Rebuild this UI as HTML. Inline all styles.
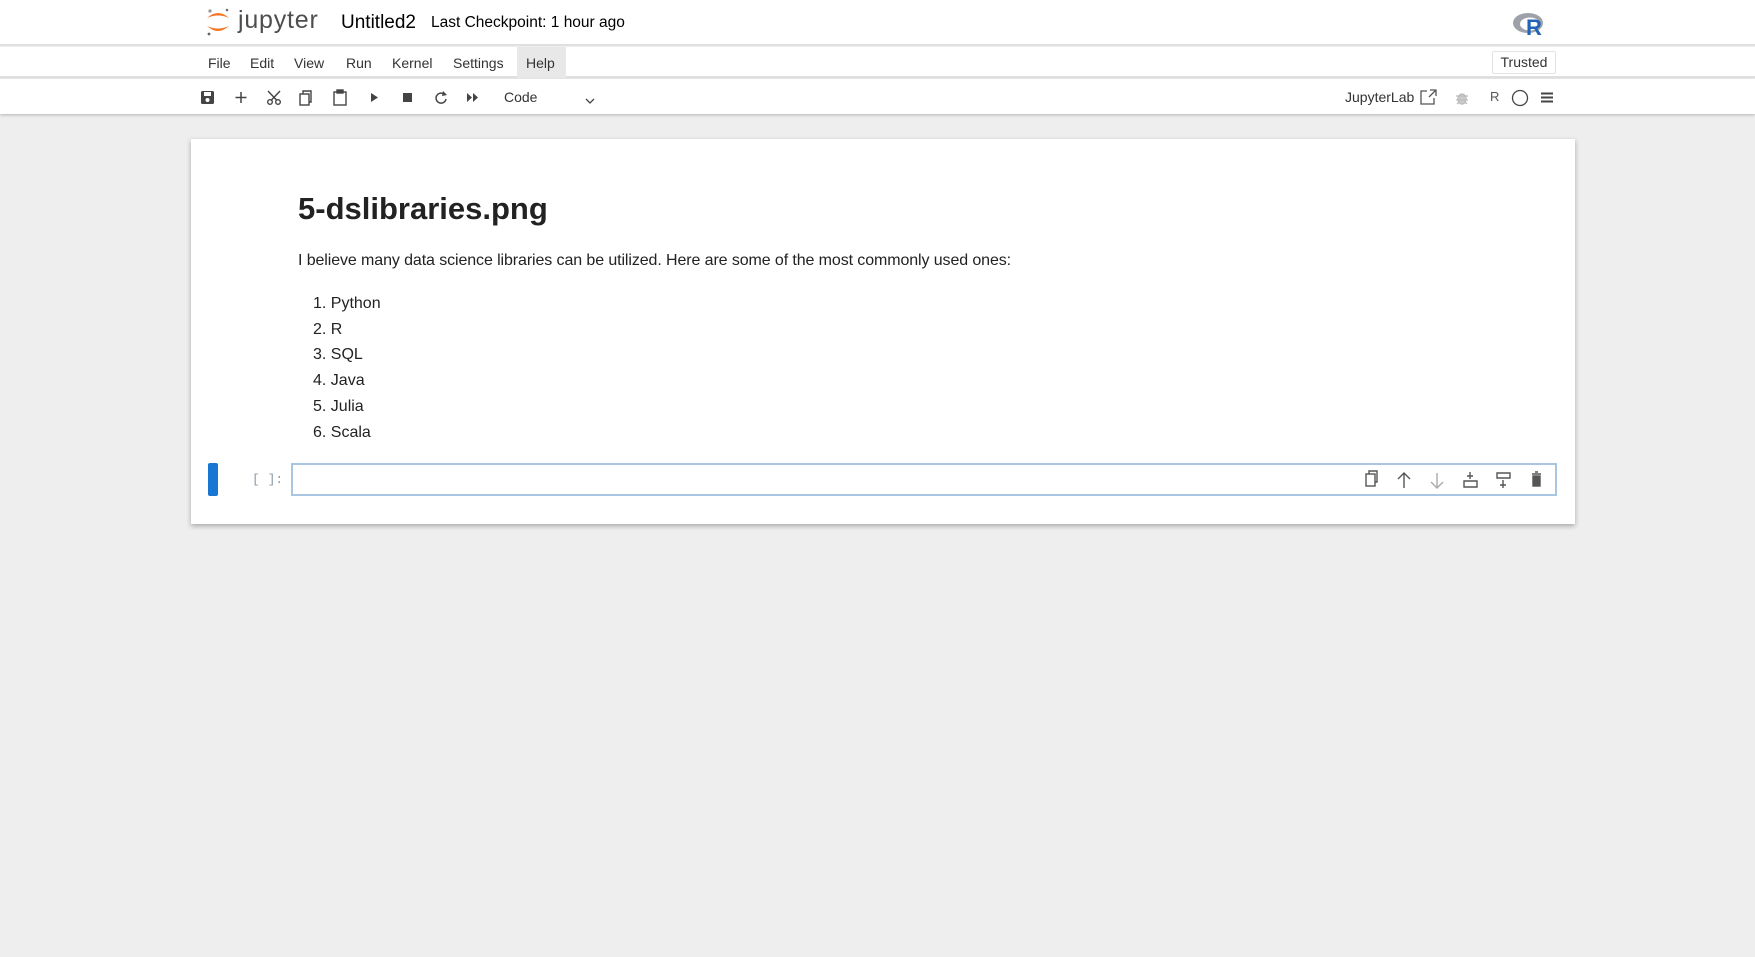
<!DOCTYPE html>
<html><head><meta charset="utf-8"><style>
*{margin:0;padding:0;box-sizing:border-box}
body{width:1755px;height:957px;background:#eeeeee;font-family:"Liberation Sans",sans-serif;color:#000;position:relative;overflow:hidden}
.abs{position:absolute}
#hdr{left:0;top:0;width:1755px;height:46px;background:#fff;border-bottom:2px solid #e0e0e0}
#menu{left:0;top:47px;width:1755px;height:31px;background:#fff;border-bottom:2px solid #e0e0e0}
#tb{left:0;top:79px;width:1755px;height:35px;background:#fff;box-shadow:0 1px 3px rgba(0,0,0,.25)}
.mi{position:absolute;top:8px;font-size:14px;color:#333}
#card{left:191px;top:139px;width:1384px;height:385px;background:#fff;box-shadow:0 2px 5px rgba(0,0,0,.3)}
li{list-style:none}
</style></head><body>
<div id="hdr" class="abs"></div>
<div id="menu" class="abs"></div>
<div id="tb" class="abs"></div>
<svg class="abs" style="left:204px;top:6px" width="28" height="32" viewBox="0 0 28 32">
<path d="M3 12 Q14 2 25 12 Q14 7 3 12Z" fill="#f37726"/>
<path d="M3 20 Q14 30 25 20 Q14 25 3 20Z" fill="#f37726"/>
<circle cx="6" cy="5" r="1.6" fill="#989798"/><circle cx="23" cy="4" r="1.3" fill="#6f7070"/><circle cx="5" cy="28" r="1.4" fill="#616262"/>
</svg>
<div class="abs" style="left:238px;top:6px;font-size:25px;color:#4e4e4e;letter-spacing:0.8px">jupyter</div>
<div class="abs" style="left:341px;top:12px;font-size:19px;color:#000">Untitled2</div>
<div class="abs" style="left:431px;top:14px;font-size:15.5px;color:#000">Last Checkpoint: 1 hour ago</div>
<svg class="abs" style="left:1512px;top:10px" width="36" height="28" viewBox="0 0 36 28">
<ellipse cx="16" cy="13" rx="15" ry="10" fill="#9ea2a8"/><ellipse cx="18" cy="14" rx="10" ry="6.5" fill="#fff"/>
<text x="14" y="25" font-family="Liberation Sans" font-weight="bold" font-size="22" fill="#2265b8">R</text>
</svg>
<div class="abs" style="left:517px;top:47px;width:49px;height:31px;background:#e8e8e8"></div>
<div class="abs" style="left:0;top:47px">
<span class="mi" style="left:208px">File</span><span class="mi" style="left:250px">Edit</span><span class="mi" style="left:294px">View</span><span class="mi" style="left:346px">Run</span><span class="mi" style="left:392px">Kernel</span><span class="mi" style="left:453px">Settings</span><span class="mi" style="left:526px">Help</span>
</div>
<div class="abs" style="left:1492px;top:51px;width:64px;height:23px;border:1px solid #e3e3e3;border-radius:2px;font-size:14px;color:#333;text-align:center;line-height:21px">Trusted</div>
<svg class="abs" style="left:0;top:86px" width="700" height="24" viewBox="0 86 700 24" fill="#444" stroke="#444">
<rect x="201" y="91" width="13" height="13" rx="1.5" stroke="none"/><rect x="204" y="92" width="7" height="4" fill="#fff" stroke="none"/><circle cx="207.5" cy="100" r="2" fill="#fff" stroke="none"/>
<path d="M241 92v11M235.5 97.5h11" stroke-width="1.5" fill="none"/>
<g fill="none" stroke-width="1.4"><circle cx="270" cy="102" r="2.3"/><circle cx="278" cy="102" r="2.3"/><path d="M271.5 100L280 91M276.5 100L268 91"/></g>
<g fill="none" stroke-width="1.4"><rect x="300" y="94" width="9" height="11"/><path d="M303 94v-3h8v11h-2"/></g>
<g fill="none" stroke-width="1.4"><rect x="334" y="92" width="12" height="13"/><rect x="337" y="90" width="6" height="3" fill="#444"/></g>
<path d="M371 93l7 4.5-7 4.5z" stroke="none"/>
<rect x="403" y="93" width="9" height="9" stroke="none"/>
<path d="M445 95a5 5 0 1 0 1 4" fill="none" stroke-width="1.5"/><path d="M443 91l4 4-5 1z" stroke="none"/>
<path d="M467 93l5 4.5-5 4.5zM473 93l5 4.5-5 4.5z" stroke="none"/>
<path d="M586 99l4 4 4-4" fill="none" stroke-width="1.3"/>
</svg>
<div class="abs" style="left:504px;top:89px;font-size:14px;color:#333">Code</div>
<div class="abs" style="left:1345px;top:89px;font-size:14px;color:#333">JupyterLab</div>
<svg class="abs" style="left:1419px;top:88px" width="140" height="20" viewBox="1419 88 140 20" fill="none" stroke="#555" stroke-width="1.3">
<path d="M1427 91h-6v13h13v-6M1430 90h6v6M1436 90l-7 7"/>
<g stroke="#bbb" fill="#ccc"><ellipse cx="1462" cy="99" rx="4" ry="5"/><path d="M1456 96h12M1456 100h12M1457 104l2-2M1467 104l-2-2"/></g>
<circle cx="1520" cy="98" r="7.5" stroke="#444"/>
<path d="M1541 93.5h12M1541 97.5h12M1541 101.5h12" stroke="#444" stroke-width="2"/>
</svg>
<div class="abs" style="left:1490px;top:89px;font-size:13px;color:#555">R</div>
<div id="card" class="abs"></div>
<div class="abs" style="left:298px;top:191px;font-size:31px;font-weight:bold;color:#222">5-dslibraries.png</div>
<div class="abs" style="left:298px;top:252px;font-size:16px;color:#222;letter-spacing:-0.1px">I believe many data science libraries can be utilized. Here are some of the most commonly used ones:</div>
<ul class="abs" style="left:313px;top:291px;font-size:16px;color:#222;line-height:25.7px">
<li>1. Python</li><li>2. R</li><li>3. SQL</li><li>4. Java</li><li>5. Julia</li><li>6. Scala</li></ul>
<div class="abs" style="left:208px;top:463px;width:10px;height:33px;background:#1976d2;border-radius:2px"></div>
<div class="abs" style="left:252px;top:472px;font-family:'Liberation Mono',monospace;font-size:13px;color:#8a9aa8">[ ]:</div>
<div class="abs" style="left:291px;top:463px;width:1266px;height:33px;border:2px solid #a8c6e2;background:#fff"></div>
<svg class="abs" style="left:1360px;top:469px" width="190" height="22" viewBox="1360 469 190 22" fill="none" stroke="#555" stroke-width="1.4">
<rect x="1366" y="474" width="9" height="12"/><path d="M1369 474v-3h8v11h-2"/>
<path d="M1404 488v-15M1398 479l6-6 6 6"/>
<path d="M1437 473v15M1431 482l6 6 6-6" stroke="#aaa"/>
<path d="M1464 481h13v6h-13zM1470 472v7M1467 476h6"/>
<path d="M1497 473h13v5h-13zM1503 480v8M1500 485h6"/>
<path d="M1532 474h9M1535 472h3"/><rect x="1533" y="476" width="7" height="10" fill="#555"/>
</svg>
</body></html>
